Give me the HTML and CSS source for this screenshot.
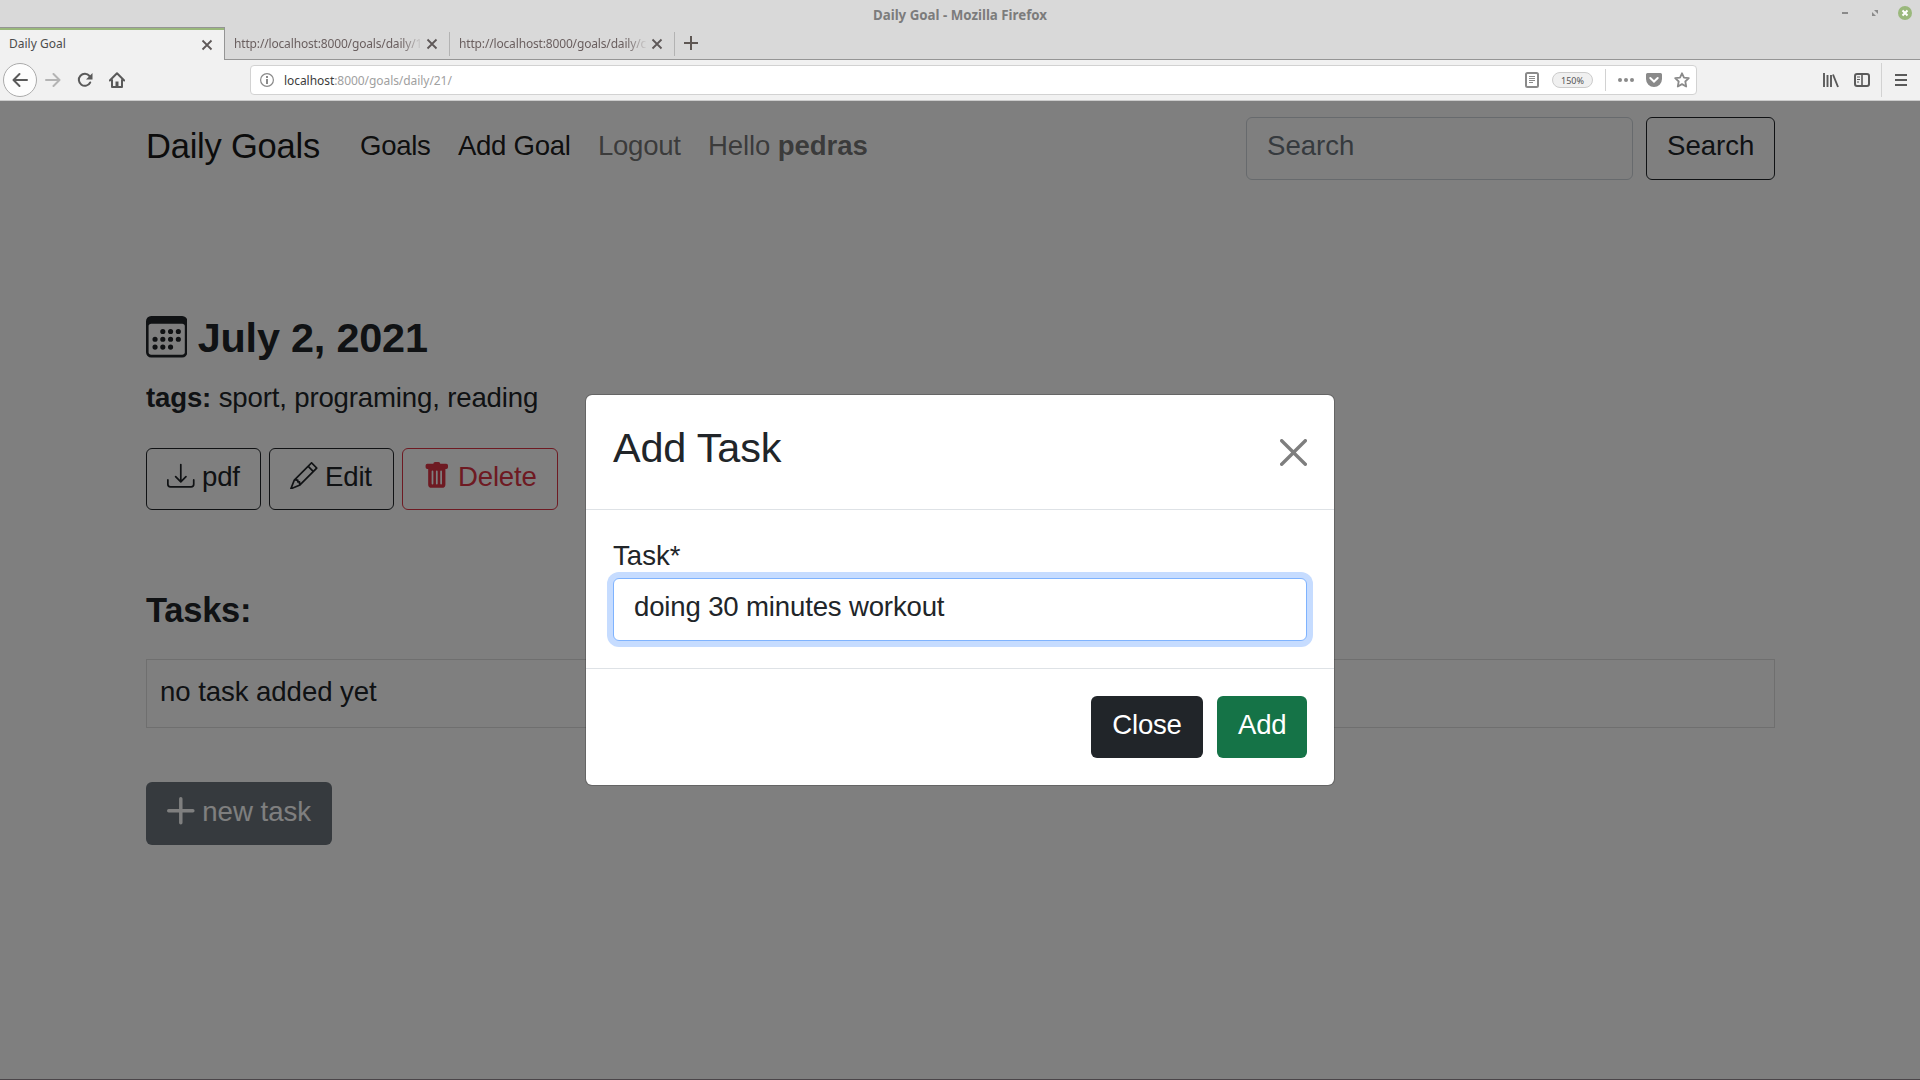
FILE: index.html
```html
<!DOCTYPE html>
<html lang="en">
<head>
<meta charset="utf-8">
<title>Daily Goal</title>
<link rel="stylesheet" href="styles.css">
</head>
<body>
<div class="window">
  <header class="chrome">
    <div class="titlebar">
      <span class="window-title">Daily Goal - Mozilla Firefox</span>
      <div class="window-buttons">
        <svg width="14" height="14" viewBox="0 0 14 14"><path d="M4 7h6" stroke="#8a8a8a" stroke-width="2"/></svg>
        <svg width="14" height="14" viewBox="0 0 14 14"><path d="M6 4h4v4zM4 6v4h4z" fill="#8a8a8a"/></svg>
        <svg width="14" height="14" viewBox="0 0 14 14"><circle cx="7" cy="7" r="7" fill="#9ab87c"/><path d="M4.5 4.5l5 5M9.5 4.5l-5 5" stroke="#fff" stroke-width="2"/></svg>
      </div>
    </div>
    <div class="tabs">
      <div class="tab active"><span class="tab-label">Daily Goal</span><svg class="tab-close" viewBox="0 0 12 12"><path d="M1.5 1.5l9 9M10.500 1.500l-9 9"/></svg></div>
      <div class="tab"><span class="tab-label fade">http://localhost:8000/goals/daily/1</span><svg class="tab-close" viewBox="0 0 12 12"><path d="M1.5 1.5l9 9M10.500 1.500l-9 9"/></svg></div>
      <div class="tab"><span class="tab-label fade">http://localhost:8000/goals/daily/c</span><svg class="tab-close" viewBox="0 0 12 12"><path d="M1.5 1.5l9 9M10.500 1.500l-9 9"/></svg></div>
      <div class="tab-add"><svg width="14" height="14" viewBox="0 0 14 14"><path d="M7 0v14M0 7h14" stroke="#5e5753" stroke-width="2"/></svg></div>
    </div>
    <div class="toolbar">
      <div class="nav-buttons">
        <span class="back"><svg width="16" height="16" viewBox="0 0 16 16"><path d="M15 8H2M7.500 2L1.500 8l6 6" class="line"/></svg></span>
        <svg class="forward" width="16" height="16" viewBox="0 0 16 16"><path d="M1 8h13M8.500 2l6 6-6 6" class="line"/></svg>
        <svg class="reload" width="16" height="16" viewBox="0 0 16 16"><path d="M13.200 10.500A6 6 0 1 1 12.500 4" class="line"/><path d="M15.500 1v6.500H9z" fill="#5a5a5a"/></svg>
        <svg class="home" width="16" height="16" viewBox="0 0 16 16"><path d="M.8 8.500L8 1.300l7.200 7.200M3 8v7h10V8" class="line"/><path d="M6.500 14V9.500h3V14z" fill="#5a5a5a"/></svg>
      </div>
      <div class="urlbar">
        <svg class="info" width="14" height="14" viewBox="0 0 14 14"><circle cx="7" cy="7" r="6.400" fill="none" stroke="#8a8a8a" stroke-width="1.200"/><path d="M7 3v2M7 6v5" stroke="#8a8a8a" stroke-width="2"/></svg>
        <span class="url"><b>localhost</b>:8000/goals/daily/21/</span>
        <svg class="reader" width="14" height="16" viewBox="0 0 14 16"><rect x="1" y="1" width="12" height="14" rx="1.500" fill="none" stroke="#8a8a8a" stroke-width="2"/><path d="M4 4.500h6M4 6.500h6M4 8.500h6M4 10.500h4" stroke="#8a8a8a"/></svg>
        <span class="zoom">150%</span>
        <span class="url-sep"></span>
        <svg class="dots" width="16" height="16" viewBox="0 0 16 16" fill="#8a8a8a"><circle cx="2" cy="8" r="2"/><circle cx="8" cy="8" r="2"/><circle cx="14" cy="8" r="2"/></svg>
        <svg class="pocket" width="16" height="16" viewBox="0 0 16 16"><path d="M1.500 1h13A1.500 1.500 0 0 1 16 2.500V7A8 8 0 0 1 0 7V2.500A1.500 1.500 0 0 1 1.500 1z" fill="#8a8a8a"/><path d="M4.300 6L8 9.500 11.700 6" fill="none" stroke="#fff" stroke-width="2" stroke-linecap="round"/></svg>
        <svg class="star" width="16" height="16" viewBox="0 0 16 16"><path d="M8 1.300l2 4.400 4.800.5-3.500 3.300.9 5L8 12.100l-4.200 2.400.9-5L1.200 6.200 6 5.700z" fill="none" stroke="#8a8a8a" stroke-width="1.800" stroke-linejoin="round"/></svg>
      </div>
      <div class="tools">
        <svg class="library" width="16" height="16" viewBox="0 0 16 16"><path d="M1 1v14M4.500 3v12M8 3v12M10 2.500L15 15" fill="none" stroke="#5a5a5a" stroke-width="1.900"/></svg>
        <svg class="sidebar" width="16" height="16" viewBox="0 0 16 16"><rect x="1" y="2" width="14" height="12" rx="2" fill="none" stroke="#5a5a5a" stroke-width="2"/><path d="M8 2v12" stroke="#5a5a5a" stroke-width="1.600"/><path d="M3 5h3M3 7.500h3M3 10h2" stroke="#5a5a5a"/></svg>
        <span class="tool-sep"></span>
        <svg class="menu" width="12" height="14" viewBox="0 0 12 14"><path d="M0 2h12M0 7h12M0 12h12" stroke="#5a5a5a" stroke-width="2"/></svg>
      </div>
    </div>
  </header>

  <main class="page">
    <nav class="navbar">
      <a class="brand">Daily Goals</a>
      <a class="nav-link active">Goals</a>
      <a class="nav-link active">Add Goal</a>
      <a class="nav-link">Logout</a>
      <span class="nav-link">Hello <strong>pedras</strong></span>
      <form class="search">
        <input class="form-control" placeholder="Search">
        <button class="btn outline-dark" type="button">Search</button>
      </form>
    </nav>

    <h1 class="date"><svg class="bi" viewBox="0 0 16 16"><path d="M14 0H2a2 2 0 0 0-2 2v12a2 2 0 0 0 2 2h12a2 2 0 0 0 2-2V2a2 2 0 0 0-2-2zM1 3.857C1 3.384 1.448 3 2 3h12c.552 0 1 .384 1 .857v10.286c0 .473-.448.857-1 .857H2c-.552 0-1-.384-1-.857V3.857z"/><path d="M6.500 7a1 1 0 1 0 0-2 1 1 0 0 0 0 2zm3 0a1 1 0 1 0 0-2 1 1 0 0 0 0 2zm3 0a1 1 0 1 0 0-2 1 1 0 0 0 0 2zm-9 3a1 1 0 1 0 0-2 1 1 0 0 0 0 2zm3 0a1 1 0 1 0 0-2 1 1 0 0 0 0 2zm3 0a1 1 0 1 0 0-2 1 1 0 0 0 0 2zm3 0a1 1 0 1 0 0-2 1 1 0 0 0 0 2zm-9 3a1 1 0 1 0 0-2 1 1 0 0 0 0 2zm3 0a1 1 0 1 0 0-2 1 1 0 0 0 0 2zm3 0a1 1 0 1 0 0-2 1 1 0 0 0 0 2z"/></svg> July 2, 2021</h1>
    <p class="tags"><strong>tags:</strong> sport, programing, reading</p>
    <div class="actions">
      <a class="btn outline-dark"><svg class="bi" viewBox="0 0 16 16"><path d="M.5 9.900a.5.5 0 0 1 .5.5v2.500a1 1 0 0 0 1 1h12a1 1 0 0 0 1-1v-2.500a.5.5 0 0 1 1 0v2.500a2 2 0 0 1-2 2H2a2 2 0 0 1-2-2v-2.500a.5.5 0 0 1 .5-.5z"/><path d="M7.646 11.854a.5.5 0 0 0 .708 0l3-3a.5.5 0 0 0-.708-.708L8.500 10.293V1.500a.5.5 0 0 0-1 0v8.793L5.354 8.146a.5.5 0 1 0-.708.708l3 3z"/></svg> pdf</a>
      <a class="btn outline-dark"><svg class="bi" viewBox="0 0 16 16"><path d="M12.146.146a.5.5 0 0 1 .708 0l3 3a.5.5 0 0 1 0 .708l-10 10a.5.5 0 0 1-.168.11l-5 2a.5.5 0 0 1-.65-.65l2-5a.5.5 0 0 1 .11-.168l10-10zM11.207 2.500 13.500 4.793 14.793 3.500 12.500 1.207 11.207 2.500zm1.586 3L10.500 3.207 4 9.707V10h.5a.5.5 0 0 1 .5.5v.5h.5a.5.5 0 0 1 .5.5v.5h.293l6.500-6.500zm-9.761 5.175-.106.106-1.528 3.821 3.821-1.528.106-.106A.5.5 0 0 1 5 12.500V12h-.5a.5.5 0 0 1-.5-.5V11h-.5a.5.5 0 0 1-.468-.325z"/></svg> Edit</a>
      <a class="btn outline-danger"><svg class="bi" viewBox="0 0 16 16"><path d="M2.500 1a1 1 0 0 0-1 1v1a1 1 0 0 0 1 1H3v9a2 2 0 0 0 2 2h6a2 2 0 0 0 2-2V4h.5a1 1 0 0 0 1-1V2a1 1 0 0 0-1-1H10a1 1 0 0 0-1-1H7a1 1 0 0 0-1 1H2.500zm3 4a.5.5 0 0 1 .5.5v7a.5.5 0 0 1-1 0v-7a.5.5 0 0 1 .5-.5zM8 5a.5.5 0 0 1 .5.5v7a.5.5 0 0 1-1 0v-7A.5.5 0 0 1 8 5zm3 .5v7a.5.5 0 0 1-1 0v-7a.5.5 0 0 1 1 0z"/></svg> Delete</a>
    </div>
    <h2 class="tasks-title">Tasks:</h2>
    <div class="task-empty">no task added yet</div>
    <button class="btn secondary" type="button"><svg class="bi" viewBox="0 0 16 16"><path d="M8 0a1 1 0 0 1 1 1v6h6a1 1 0 1 1 0 2H9v6a1 1 0 1 1-2 0V9H1a1 1 0 0 1 0-2h6V1a1 1 0 0 1 1-1z"/></svg> new task</button>

    <div class="backdrop">
      <section class="modal">
        <div class="modal-header">
          <h3 class="modal-title">Add Task</h3>
          <svg class="modal-x" viewBox="0 0 16 16"><path d="M.293.293a1 1 0 011.414 0L8 6.586 14.293.293a1 1 0 111.414 1.414L9.414 8l6.293 6.293a1 1 0 01-1.414 1.414L8 9.414l-6.293 6.293a1 1 0 01-1.414-1.414L6.586 8 .293 1.707a1 1 0 010-1.414z"/></svg>
        </div>
        <div class="modal-body">
          <label class="form-label" for="task">Task*</label>
          <input class="form-control focused" id="task" value="doing 30 minutes workout">
        </div>
        <div class="modal-footer">
          <button class="btn dark" type="button">Close</button>
          <button class="btn success" type="button">Add</button>
        </div>
      </section>
    </div>
  </main>
</div>
</body>
</html>
```
FILE: styles.css
```css
* { box-sizing: border-box; }
body { margin: 0; }
h1, h2, h3, p { margin: 0; }
svg { display: block; flex: none; }

.window {
  display: flex;
  flex-direction: column;
  width: 1920px;
  height: 1080px;
  overflow: hidden;
}

/* Browser chrome */
.chrome {
  height: 101px;
  background: #d9d9d9;
  font: 12px/16px "Noto Sans", sans-serif;
  color: #4c4c4c;
}
.titlebar {
  display: grid;
  grid-template-columns: 1fr auto 1fr;
  height: 27px;
  padding: 6px 8px 0;
}
.window-title {
  grid-column: 2;
  font-size: 13.3px;
  line-height: 18px;
  font-weight: 700;
  color: #7c7c7c;
}
.window-buttons {
  display: flex;
  justify-content: flex-end;
  gap: 16px;
}
.tabs { display: flex; height: 33px; }
.tab {
  display: flex;
  align-items: center;
  width: 225px;
  padding: 2px 12px 0 9px;
  border-bottom: 1px solid #959595;
  position: relative;
  color: #6a5f5f;
}
.tab.active {
  padding: 1px 11px 0 9px;
  background: #f1f1f1;
  border-top: 1px solid #959595;
  border-right: 1px solid #959595;
  border-bottom: 0;
  box-shadow: inset 0 2px #9ab87c;
  color: #4c4c4c;
}
.tab:not(.active)::after {
  content: "";
  position: absolute;
  right: 0;
  top: 5px;
  width: 1px;
  height: 24px;
  background: #b3b3b3;
}
.tab-label { flex: 1; min-width: 0; white-space: nowrap; }
.active .tab-label { margin-bottom: 2px; }
.fade {
  margin-right: 3px;
  letter-spacing: -.16px;
  -webkit-mask-image: linear-gradient(to left, transparent, #000 22px);
  mask-image: linear-gradient(to left, transparent, #000 22px);
}
.tab-close { width: 12px; height: 12px; fill: none; stroke: #5e5858; stroke-width: 1.8; }
.tab-add { flex: 1; padding: 9px 0 0 9px; border-bottom: 1px solid #959595; }
.toolbar {
  display: flex;
  height: 41px;
  background: #f1f1f1;
  border-bottom: 1px solid #ccc;
}
.line { fill: none; stroke: #5a5a5a; stroke-width: 2; stroke-linecap: round; stroke-linejoin: round; }
.nav-buttons { display: flex; align-items: center; width: 250px; padding-left: 3px; }
.back {
  display: grid;
  place-items: center;
  width: 34px;
  height: 34px;
  border: 1px solid #ababab;
  border-radius: 50%;
  background: #fdfdfd;
}
.forward { margin-left: 8px; opacity: .4; }
.reload { margin-left: 16px; }
.home { margin-left: 16px; }
.urlbar {
  display: flex;
  align-items: center;
  width: 1447px;
  height: 30px;
  margin-top: 5px;
  padding: 0 6px 0 9px;
  background: #fff;
  border: 1px solid #d2d2d2;
  border-radius: 4px;
}
.url { flex: 1; margin: 1px 0 0 10px; letter-spacing: -.06px; color: #a0a0a0; }
.url b { font-weight: 400; color: #3c3c3c; }
.zoom {
  width: 41px;
  height: 16px;
  margin-left: 13px;
  border: 1px solid #ccc;
  border-radius: 8px;
  background: #f0f0f0;
  font-size: 9px;
  line-height: 15px;
  text-align: center;
  color: #555;
}
.url-sep { width: 1px; height: 22px; margin: 0 12px; background: #d2d2d2; }
.pocket { margin-left: 12px; }
.star { margin-left: 12px; }
.tools { display: flex; align-items: center; margin-left: 126px; }
.sidebar { margin-left: 15px; }
.tool-sep { width: 1px; height: 34px; margin: 0 13px 0 11px; background: #d2d2d2; }

/* Page */
.page {
  position: relative;
  flex: 1;
  padding: 16px 145px 0 146px;
  background: #fff;
  color: #212529;
  font: 27.6px/41px "Liberation Sans", Arial, sans-serif;
}
.bi { display: inline-block; width: 1em; height: 1em; vertical-align: -.125em; fill: currentColor; }
.navbar { display: flex; height: 63px; margin-bottom: 133px; }
.brand { margin: 8px 40px 0 0; font-size: 34.5px; line-height: 42px; letter-spacing: -.22px; color: #191919; }
.nav-link { margin: 8px 27.4px 0 0; letter-spacing: -.3px; color: rgba(0, 0, 0, .55); white-space: nowrap; }
span.nav-link { letter-spacing: -.12px; }
.nav-link.active { color: rgba(0, 0, 0, .9); }
.search { display: flex; gap: 13px; margin-left: auto; }
.search .btn { width: 129px; height: 63px; padding-bottom: 13px; }
.form-control {
  width: 387px;
  height: 63px;
  padding: 7px 20px 13px;
  border: 1px solid #ced4da;
  border-radius: 6px;
  background: #fff;
  font: inherit;
  color: #212529;
  outline: 0;
}
.form-control::placeholder { color: #6c757d; opacity: 1; }
.btn {
  display: inline-block;
  height: 62px;
  padding: 7px 20px 12px;
  border: 1px solid transparent;
  border-radius: 6px;
  background: transparent;
  font: inherit;
  white-space: nowrap;
}
.outline-dark { border-color: #212529; color: #212529; }
.outline-danger { border-color: #dc3545; color: #dc3545; }
.dark { background: #212529; color: #fff; }
.success { background: #157347; color: #fff; }
.secondary { display: block; height: 63px; background: #6c757d; color: #fff; }
.secondary .bi { vertical-align: -.15em; }
.date { height: 64px; font-size: 41.4px; line-height: 50px; font-weight: 700; letter-spacing: -.2px; }
.date .bi { margin-right: -1px; vertical-align: -.135em; }
.tags { height: 71px; letter-spacing: -.16px; }
.actions {
  display: grid;
  grid-template-columns: 115px 125px 156px;
  gap: 8px;
  height: 141px;
}
.actions .btn { letter-spacing: -.2px; }
.tasks-title { height: 70px; font-size: 34.5px; line-height: 42px; font-weight: 700; letter-spacing: -.25px; }
.task-empty { height: 69px; margin-bottom: 54px; padding: 11px 13px; border: 1px solid rgba(0, 0, 0, .125); letter-spacing: -.07px; }

/* Dialog */
.backdrop {
  position: absolute;
  inset: 0;
  display: flex;
  justify-content: center;
  align-items: flex-start;
  padding-top: 293px;
  background: rgba(0, 0, 0, .5);
  border-bottom: 1px solid #4a4549;
}
.modal {
  width: 750px;
  height: 392px;
  border: 1px solid rgba(0, 0, 0, .2);
  border-radius: 7px;
  background: #fff;
  background-clip: padding-box;
}
.modal-header {
  display: flex;
  justify-content: space-between;
  height: 115px;
  padding: 28px 27px 0;
  border-bottom: 1px solid #dee2e6;
}
.modal-title { font-size: 41.4px; line-height: 50px; font-weight: 400; letter-spacing: -.15px; }
.modal-x { width: 27px; height: 27px; margin-top: 16px; opacity: .5; }
.modal-body { height: 158px; padding: 25px 27px 0; }
.form-label { display: block; margin-bottom: 2px; }
.modal-body .form-control { display: block; width: 100%; letter-spacing: -.17px; }
.focused { border-color: #7fb3fe; box-shadow: 0 0 0 6px #c6dcff; }
.modal-footer {
  display: flex;
  justify-content: flex-end;
  gap: 14px;
  padding: 27px 27px 0;
  border-top: 1px solid #dee2e6;
}
.modal-footer .btn { letter-spacing: -.25px; }
.modal-footer .dark { width: 112px; }
.modal-footer .success { width: 90px; }
```
